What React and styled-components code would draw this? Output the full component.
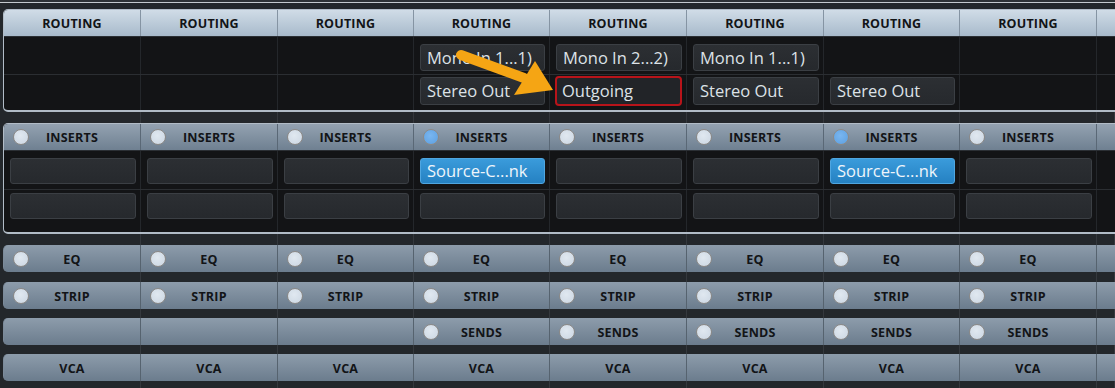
import React from "react";
import styled, { createGlobalStyle, css } from "styled-components";

const COLS = "137px 137px 136px 136px 137px 137px 136px 137px 1fr";

const GlobalStyle = createGlobalStyle`
  body {
    margin: 0;
    background: #23272b;
    font-family: "Open Sans", "Noto Sans", sans-serif;
  }
`;

const Page = styled.div`
  position: relative;
  width: 1115px;
  height: 388px;
  overflow: hidden;
  padding-left: 3px;
  box-sizing: border-box;
  background: #23272b;
  display: flex;
  flex-direction: column;

  & > * {
    flex-shrink: 0;
  }
`;

const TopEdge = styled.div`
  height: 9px;
  margin-left: -3px;
  background: linear-gradient(
    #2e3236 0 2px,
    #c4c9ce 2px 3px,
    #23272b 3px
  );
`;

const Panel = styled.div`
  width: calc(100% + 12px);
  border: 1px solid #b1bcc7;
  border-bottom-width: 2px;
  border-radius: 5px;
  overflow: hidden;
  background: #131416;
  box-sizing: border-box;
`;

const HeaderRow = styled.div`
  display: grid;
  grid-template-columns: ${COLS};
  height: ${(p) => p.$height}px;
  background: ${(p) =>
    p.$tone === "light"
      ? "linear-gradient(#d0dce7, #a8bacb)"
      : "linear-gradient(#93a2b1, #6f8091)"};
  border-bottom: 1px solid #2b2f34;
`;

const HeaderCell = styled.div`
  display: grid;
  grid-template-columns: 1fr auto 1fr;
  align-items: center;
  border-right: 1px solid ${(p) => (p.$tone === "light" ? "#8594a3" : "#5a6876")};
  &:last-child {
    border-right: none;
  }
`;

const Led = styled.span`
  justify-self: start;
  margin-left: 9px;
  width: 14px;
  height: 14px;
  border-radius: 50%;
  border: 1px solid #8c8a88;
  background: ${(p) =>
    p.$on
      ? "radial-gradient(circle at 45% 40%, #79b6f0, #5d9fe0)"
      : "radial-gradient(circle at 45% 40%, #e0e8f0, #cbd6e2)"};
`;

const Label = styled.span`
  grid-column: 2;
  font-size: 12.5px;
  font-weight: 700;
  color: #121417;
  letter-spacing: 0.2px;
  padding-top: 1px;
`;

const BodyRow = styled.div`
  display: grid;
  grid-template-columns: ${COLS};
  height: ${(p) => p.$height}px;
  border-bottom: ${(p) => (p.$line ? "1px solid #2b2e32" : "none")};
`;

const BodyCell = styled.div`
  padding: ${(p) => p.$top}px 4px 0 6px;
  border-right: 1px solid #24272b;
  box-sizing: border-box;
  &:last-child {
    border-right: none;
  }
`;

const Slot = styled.div`
  height: ${(p) => p.$h}px;
  box-sizing: border-box;
  border-radius: 3px;
  border: 1px solid #3b3f44;
  background: linear-gradient(#2c2f33, #26292d);
  color: #dde2e7;
  font-size: 16.5px;
  line-height: ${(p) => p.$h - 2}px;
  padding-left: 6px;
  white-space: nowrap;
  overflow: hidden;
  ${(p) =>
    p.$kind === "active" &&
    css`
      border-color: #4fa6e0;
      background: linear-gradient(#3a9bdb, #2581c2);
      color: #eef5fb;
    `}
  ${(p) =>
    p.$kind === "selected" &&
    css`
      margin: -1px 0 0 -1px;
      height: ${p.$h + 2}px;
      border: 2px solid #b8141a;
      border-radius: 4px;
      background: #222428;
      padding-left: 5px;
      line-height: ${p.$h - 2}px;
    `}
`;

const Gap = styled.div`
  display: grid;
  grid-template-columns: ${COLS};
  height: ${(p) => p.$height}px;
  margin-left: 1px;
`;

const GapCell = styled.div`
  border-right: 1px solid #34383d;
`;

const Bar = styled.div`
  display: grid;
  grid-template-columns: ${COLS};
  width: calc(100% + 12px);
  height: 27px;
  box-sizing: border-box;
  border-left: 1px solid #7c8b9a;
  border-radius: 5px 0 0 5px;
  background: linear-gradient(#8d9cab, #6b7c8d);
`;

const BarCell = styled(HeaderCell)`
  border-right: 1px solid #56636f;
`;

const Arrow = styled.svg`
  position: absolute;
  left: 0;
  top: 0;
  pointer-events: none;
`;

const ROUTE_IN = [null, null, null, "Mono In 1...1)", "Mono In 2...2)", "Mono In 1...1)", null, null, null];
const ROUTE_OUT = [null, null, null, "Stereo Out", "Outgoing", "Stereo Out", "Stereo Out", null, null];
const ACTIVE_INSERT = [3, 6];
const CHANNELS = [0, 1, 2, 3, 4, 5, 6, 7];
const SENDS_FROM = 3;

const Filler = () => <HeaderCell />;

const Spacer = ({ height }) => (
  <Gap $height={height}>
    {[...CHANNELS, 8].map((i) => (
      <GapCell key={i} />
    ))}
  </Gap>
);

const StripBar = ({ label, led, from = 0 }) => (
  <Bar>
    {CHANNELS.map((i) => (
      <BarCell key={i}>
        {i >= from && led && <Led />}
        {i >= from && <Label>{label}</Label>}
      </BarCell>
    ))}
    <Filler />
  </Bar>
);

export default function App() {
  return (
    <>
      <GlobalStyle />
      <Page>
        <TopEdge />
        <Panel>
          <HeaderRow $tone="light" $height={26}>
            {CHANNELS.map((i) => (
              <HeaderCell key={i} $tone="light">
                <Label>ROUTING</Label>
              </HeaderCell>
            ))}
            <HeaderCell $tone="light" />
          </HeaderRow>
          <BodyRow $height={37} $line>
            {ROUTE_IN.map((t, i) => (
              <BodyCell key={i} $top={7}>
                {t && <Slot $h={27}>{t}</Slot>}
              </BodyCell>
            ))}
          </BodyRow>
          <BodyRow $height={35}>
            {ROUTE_OUT.map((t, i) => (
              <BodyCell key={i} $top={2}>
                {t && (
                  <Slot $h={28} $kind={t === "Outgoing" ? "selected" : undefined}>
                    {t}
                  </Slot>
                )}
              </BodyCell>
            ))}
          </BodyRow>
        </Panel>
        <Spacer height={11} />
        <Panel>
          <HeaderRow $tone="steel" $height={26}>
            {CHANNELS.map((i) => (
              <HeaderCell key={i}>
                <Led $on={ACTIVE_INSERT.includes(i)} />
                <Label>INSERTS</Label>
              </HeaderCell>
            ))}
            <HeaderCell />
          </HeaderRow>
          <BodyRow $height={38} $line>
            {CHANNELS.map((i) => (
              <BodyCell key={i} $top={7}>
                {ACTIVE_INSERT.includes(i) ? (
                  <Slot $h={26} $kind="active">
                    Source-C...nk
                  </Slot>
                ) : (
                  <Slot $h={26} />
                )}
              </BodyCell>
            ))}
            <BodyCell />
          </BodyRow>
          <BodyRow $height={42}>
            {CHANNELS.map((i) => (
              <BodyCell key={i} $top={3}>
                <Slot $h={26} />
              </BodyCell>
            ))}
            <BodyCell />
          </BodyRow>
        </Panel>
        <Spacer height={11} />
        <StripBar label="EQ" led />
        <Spacer height={10} />
        <StripBar label="STRIP" led />
        <Spacer height={9} />
        <StripBar label="SENDS" led from={SENDS_FROM} />
        <Spacer height={9} />
        <StripBar label="VCA" />
        <Spacer height={10} />
        <Arrow width="1115" height="388" viewBox="0 0 1115 388">
          <line
            x1="461"
            y1="55"
            x2="524"
            y2="78"
            stroke="#f5a514"
            strokeWidth="10"
            strokeLinecap="round"
          />
          <polygon points="514,95 535,61 553,90" fill="#f5a514" />
        </Arrow>
      </Page>
    </>
  );
}
